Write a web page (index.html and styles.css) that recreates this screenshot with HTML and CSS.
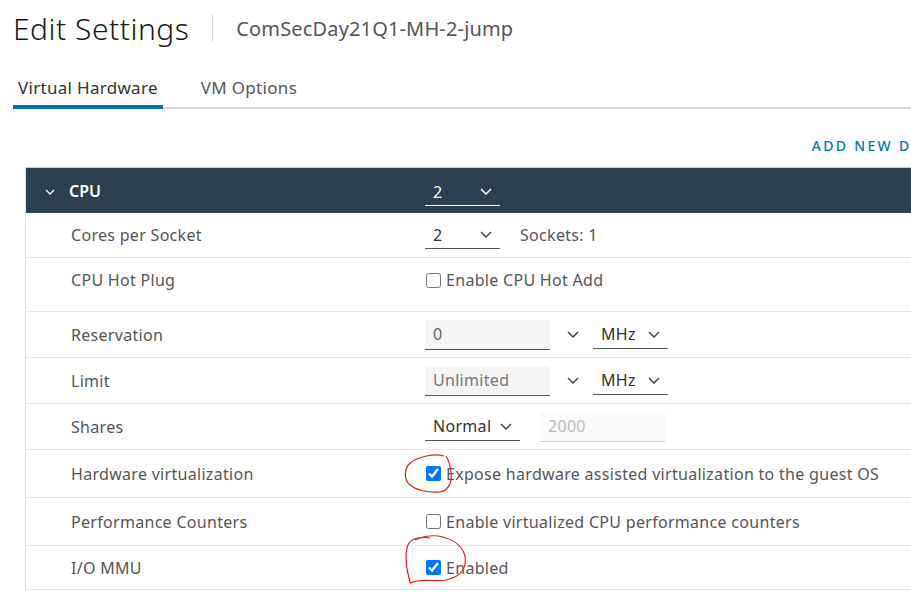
FILE: index.html
```html
<!DOCTYPE html>
<html>
<head>
<meta charset="utf-8">
<link rel="stylesheet" href="styles.css">
</head>
<body>
<div class="page">
  <header class="title-bar">
    <h1 class="title">Edit Settings</h1>
    <span class="divider"></span>
    <span class="subtitle">ComSecDay21Q1-MH-2-jump</span>
  </header>
  <nav class="tabs">
    <span class="tab active">Virtual Hardware</span>
    <span class="tab">VM Options</span>
  </nav>
  <div class="actions">
    <span class="add-btn">ADD NEW DEVICE</span>
  </div>
  <section class="panel">
    <div class="panel-head">
      <div class="head-label">
        <svg class="chev-head" width="10" height="6" viewBox="0 0 10 6"><path d="M1 1 L5 5 L9 1" fill="none" stroke="#fff" stroke-width="1.3"/></svg>
        <span>CPU</span>
      </div>
      <div class="select dark"><span>2</span><svg width="12" height="7" viewBox="0 0 12 7"><path d="M1 1 L6 6 L11 1" fill="none" stroke="#fff" stroke-width="1.5"/></svg></div>
    </div>
    <div class="row first">
      <div class="label">Cores per Socket</div>
      <div class="ctrl">
        <div class="select"><span>2</span><svg width="12" height="7" viewBox="0 0 12 7"><path d="M1 1 L6 6 L11 1" fill="none" stroke="#444" stroke-width="1.5"/></svg></div>
        <span class="note">Sockets: 1</span>
      </div>
    </div>
    <div class="row tall">
      <div class="label">CPU Hot Plug</div>
      <div class="ctrl"><label class="check"><input type="checkbox"><span>Enable CPU Hot Add</span></label></div>
    </div>
    <div class="row">
      <div class="label">Reservation</div>
      <div class="ctrl">
        <div class="input"><span>0</span></div>
        <svg class="chev-free" width="12" height="7" viewBox="0 0 12 7"><path d="M1 1 L6 6 L11 1" fill="none" stroke="#444" stroke-width="1.5"/></svg>
        <div class="select unit"><span>MHz</span><svg width="12" height="7" viewBox="0 0 12 7"><path d="M1 1 L6 6 L11 1" fill="none" stroke="#444" stroke-width="1.5"/></svg></div>
      </div>
    </div>
    <div class="row">
      <div class="label">Limit</div>
      <div class="ctrl">
        <div class="input"><span class="muted">Unlimited</span></div>
        <svg class="chev-free" width="12" height="7" viewBox="0 0 12 7"><path d="M1 1 L6 6 L11 1" fill="none" stroke="#444" stroke-width="1.5"/></svg>
        <div class="select unit"><span>MHz</span><svg width="12" height="7" viewBox="0 0 12 7"><path d="M1 1 L6 6 L11 1" fill="none" stroke="#444" stroke-width="1.5"/></svg></div>
      </div>
    </div>
    <div class="row">
      <div class="label">Shares</div>
      <div class="ctrl">
        <div class="select normal"><span>Normal</span><svg width="12" height="7" viewBox="0 0 12 7"><path d="M1 1 L6 6 L11 1" fill="none" stroke="#444" stroke-width="1.5"/></svg></div>
        <div class="input disabled"><span>2000</span></div>
      </div>
    </div>
    <div class="row mid">
      <div class="label">Hardware virtualization</div>
      <div class="ctrl"><label class="check"><input type="checkbox" checked><span>Expose hardware assisted virtualization to the guest OS</span></label></div>
    </div>
    <div class="row mid">
      <div class="label">Performance Counters</div>
      <div class="ctrl"><label class="check"><input type="checkbox"><span>Enable virtualized CPU performance counters</span></label></div>
    </div>
    <div class="row last">
      <div class="label">I/O MMU</div>
      <div class="ctrl"><label class="check"><input type="checkbox" checked><span>Enabled</span></label></div>
    </div>
  </section>
</div>
<svg class="marks" width="911" height="592" viewBox="0 0 911 592">
  <path d="M444 456 C434 453 416 457 409 464 C404 470 404 480 410 485 C416 490 428 493 440 492 C449 490 452 482 451 472 C450 464 448 459 446 456" fill="none" stroke="#e02020" stroke-width="1.2"/>
  <path d="M430 538 C420 536 410 539 408 545 C405 552 406 566 408 574 C410 581 410 584 411 583 C418 578 436 582 446 580 C462 576 467 568 465 556 C462 544 450 538 438 536 C430 535 420 537 415 540" fill="none" stroke="#e02020" stroke-width="1.2"/>
</svg>
</body>
</html>
```

FILE: styles.css
```css
html, body {
  margin: 0;
  padding: 0;
  background: #fff;
  overflow: hidden;
}
body {
  font-family: "Noto Sans", "Open Sans", sans-serif;
  color: #565656;
  width: 911px;
  height: 592px;
  position: relative;
}
.page {
  width: 975px;
  padding-left: 13px;
  box-sizing: border-box;
}
.title-bar {
  display: flex;
  align-items: center;
  height: 56px;
}
.title {
  margin: 0;
  font-weight: 300;
  font-size: 30px;
  color: #1a1a1a;
  letter-spacing: 0.5px;
}
.divider {
  width: 1px;
  height: 26px;
  background: #ccc;
  margin: 0 23px 0 23px;
}
.subtitle {
  font-size: 20px;
  font-weight: 400;
  color: #565656;
  letter-spacing: 0.15px;
}
.tabs {
  display: flex;
  margin-top: 17px;
  border-bottom: 2px solid #d7d7d7;
  gap: 33px;
}
.tab {
  font-size: 17px;
  letter-spacing: 0.3px;
  color: #565656;
  padding: 3px 5px 6px;
  margin-bottom: -2px;
  border-bottom: 4px solid transparent;
}
.tab.active {
  color: #333;
  border-bottom-color: #0072a3;
}
.actions {
  display: flex;
  justify-content: flex-end;
  padding: 27px 14px 12px 0;
}
.add-btn {
  color: #0079b8;
  font-size: 14px;
  letter-spacing: 2.3px;
  font-weight: 500;
}
.panel {
  margin-left: 12px;
  border-left: 1px solid #ddd;
  border-top: 1px solid #ccc;
}
.panel-head {
  display: grid;
  grid-template-columns: 399px 1fr;
  align-items: center;
  height: 45px;
  background: #2b404e;
  color: #fff;
}
.head-label {
  display: flex;
  align-items: center;
  padding-left: 19px;
  gap: 14px;
  font-weight: 600;
  font-size: 16px;
}
.chev-head { margin-top: 2px; }
.row {
  display: grid;
  grid-template-columns: 399px 1fr;
  align-items: center;
  box-sizing: border-box;
  height: 46px;
  border-bottom: 1px solid #e8e8e8;
  font-size: 16px;
  letter-spacing: 0.3px;
}
.row.first { height: 45px; }
.row.tall {
  height: 54px;
  align-items: start;
  padding-top: 11px;
}
.row.mid { height: 48px; }
.row.last { height: 44px; }
.label {
  padding-left: 45px;
  color: #565656;
}
.ctrl {
  display: flex;
  align-items: center;
}
.select {
  width: 75px;
  height: 28px;
  box-sizing: border-box;
  border-bottom: 1px solid #565656;
  display: flex;
  align-items: center;
  justify-content: space-between;
  padding: 0 8px;
  color: #333;
}
.select.dark {
  border-bottom-color: #fff;
  color: #fff;
  margin-top: 3px;
}
.select.unit { margin-left: 14px; }
.select.normal { width: 95px; }
.note { margin-left: 20px; }
.input {
  width: 125px;
  height: 30px;
  box-sizing: border-box;
  background: #f5f5f5;
  border-bottom: 1px solid #565656;
  display: flex;
  align-items: center;
  padding: 0 8px;
  color: #666;
}
.input .muted { color: #777; }
.input.disabled {
  margin-left: 20px;
  background: #fafafa;
  border-bottom-color: #ccc;
  color: #bbb;
}
.chev-free { margin-left: 17px; }
.check {
  display: flex;
  align-items: center;
  gap: 5px;
  color: #565656;
}
.check input {
  width: 15px;
  height: 15px;
  margin: 0 0 0 1px;
}
.marks {
  position: absolute;
  left: 0;
  top: 0;
  pointer-events: none;
}
```
